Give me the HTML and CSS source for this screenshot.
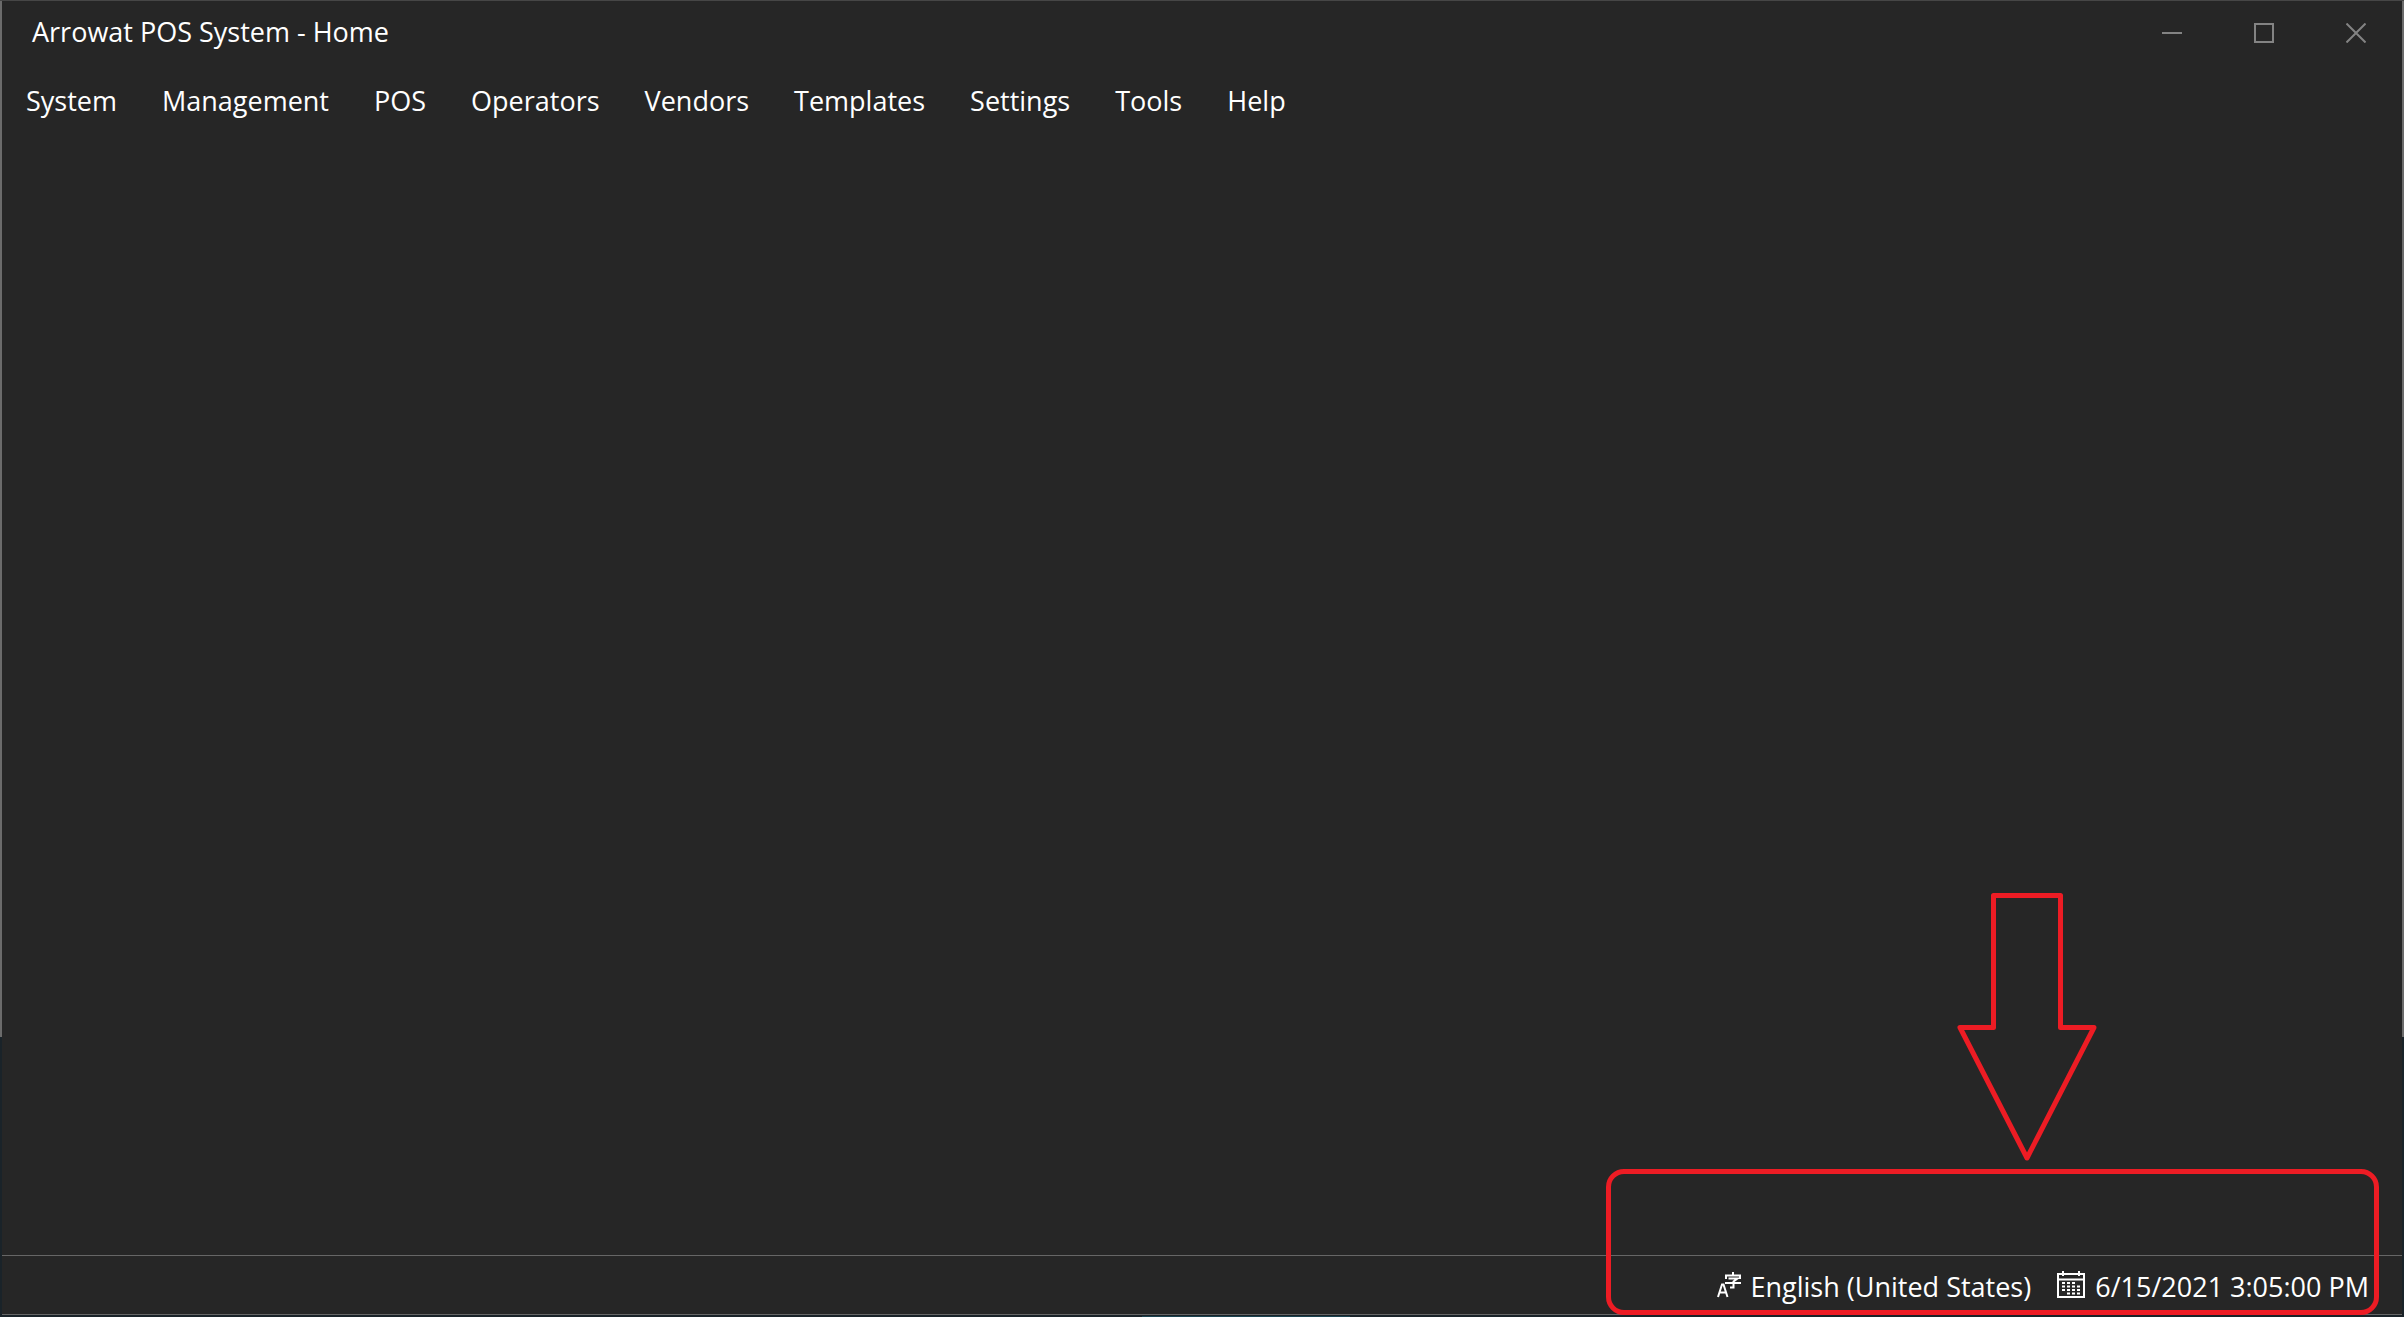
FILE: index.html
```html
<!DOCTYPE html>
<html lang="en">
<head>
<meta charset="utf-8">
<title>Arrowat POS System - Home</title>
<link rel="stylesheet" href="styles.css">
</head>
<body>
<div class="window">
  <header class="titlebar">
    <h1 class="title">Arrowat POS System - Home</h1>
    <div class="controls">
      <button class="control" type="button" aria-label="Minimize">
        <svg width="20" height="20" viewBox="0 0 20 20"><path d="M0 10H20"/></svg>
      </button>
      <button class="control" type="button" aria-label="Maximize">
        <svg width="20" height="20" viewBox="0 0 20 20"><path d="M1 1H19V19H1Z"/></svg>
      </button>
      <button class="control" type="button" aria-label="Close">
        <svg width="20" height="20" viewBox="0 0 20 20"><path d="M.5 .5L19.5 19.5M19.5 .5L.5 19.5"/></svg>
      </button>
    </div>
  </header>
  <nav class="menu">
    <button class="menu-item" type="button">System</button>
    <button class="menu-item" type="button">Management</button>
    <button class="menu-item" type="button">POS</button>
    <button class="menu-item" type="button">Operators</button>
    <button class="menu-item" type="button">Vendors</button>
    <button class="menu-item" type="button">Templates</button>
    <button class="menu-item" type="button">Settings</button>
    <button class="menu-item" type="button">Tools</button>
    <button class="menu-item" type="button">Help</button>
  </nav>
  <main class="workspace"></main>
  <footer class="status">
    <button class="status-item language" type="button">
      <svg class="icon" width="24" height="26" viewBox="0 0 24 26" aria-hidden="true">
        <path d="M1 25L5 12.500H6.500L10.500 25M2.500 20.500H9"/>
        <path d="M16 0V3M9 7V3.500H23V7M11.500 6.500H20.500L16.500 9.500V15.500H13M8 11H24"/>
      </svg>
      <span>English (United States)</span>
    </button>
    <div class="status-item date">
      <svg class="icon" width="28" height="28" viewBox="0 0 28 28" aria-hidden="true">
        <path d="M1 3H27V26H1ZM1 8.500H27M6 0V5M22 0V5"/>
        <path class="dots" d="M5 12H19M5 15.500H24M5 19H24M10 22.500H24"/>
      </svg>
      <time datetime="2021-06-15T15:05:00">6/15/2021 3:05:00 PM</time>
    </div>
  </footer>
  <div class="callout"></div>
  <svg class="arrow" width="140" height="269" viewBox="0 0 140 269" aria-hidden="true">
    <path d="M36.500 2.500H103.500V134.500H137L70 265L3 134.500H36.500Z"/>
  </svg>
</div>
</body>
</html>
```
FILE: styles.css
```css
* {
  box-sizing: border-box;
}

body {
  margin: 0;
  min-height: 100vh;
  display: flex;
  padding: 1px 2px 2px;
  color: #fff;
  font: 27px/36px "Open Sans", "Noto Sans", sans-serif;
  background:
    linear-gradient(#1b4350, #1b4350) 52% 100% / 208px 1px no-repeat,
    linear-gradient(#464646, #464646) 0 0 / 100% 1px no-repeat,
    linear-gradient(#6b6b6b, #6b6b6b) 0 0 / 100% 1037px no-repeat,
    #1a2329;
}

.window {
  position: relative;
  flex: 1;
  display: flex;
  flex-direction: column;
  background: #262626;
  border-bottom: 1px solid #666;
}

button {
  margin: 0;
  padding: 0;
  border: 0;
  background: none;
  color: inherit;
  font: inherit;
}

.titlebar {
  display: flex;
  justify-content: space-between;
  height: 64px;
}

.title {
  margin: 0;
  padding: 13px 0 0 30px;
  font: inherit;
}

.controls {
  display: flex;
}

.control {
  display: flex;
  align-items: center;
  justify-content: center;
  width: 92px;
}

.control svg {
  fill: none;
  stroke: #838383;
  stroke-width: 2;
}

.menu {
  display: flex;
  gap: 45px;
  padding: 18px 24px;
}

.workspace {
  flex: 1;
}

.status {
  display: flex;
  justify-content: flex-end;
  align-items: center;
  gap: 26px;
  height: 59px;
  padding: 4px 33px 0 0;
  border-top: 1px solid #666;
}

.status-item {
  display: flex;
  align-items: center;
  gap: 10px;
}

.icon {
  fill: none;
  stroke: #fff;
  stroke-width: 2;
  margin-bottom: 4px;
}

.dots {
  stroke-dasharray: 3 2;
}

.callout {
  position: absolute;
  right: 23px;
  bottom: -1px;
  width: 773px;
  height: 146px;
  border: 5px solid #ed1c24;
  border-radius: 18px;
  pointer-events: none;
}

.arrow {
  position: absolute;
  right: 305px;
  bottom: 152px;
  fill: none;
  stroke: #ed1c24;
  stroke-width: 5;
  stroke-linejoin: round;
}
```
